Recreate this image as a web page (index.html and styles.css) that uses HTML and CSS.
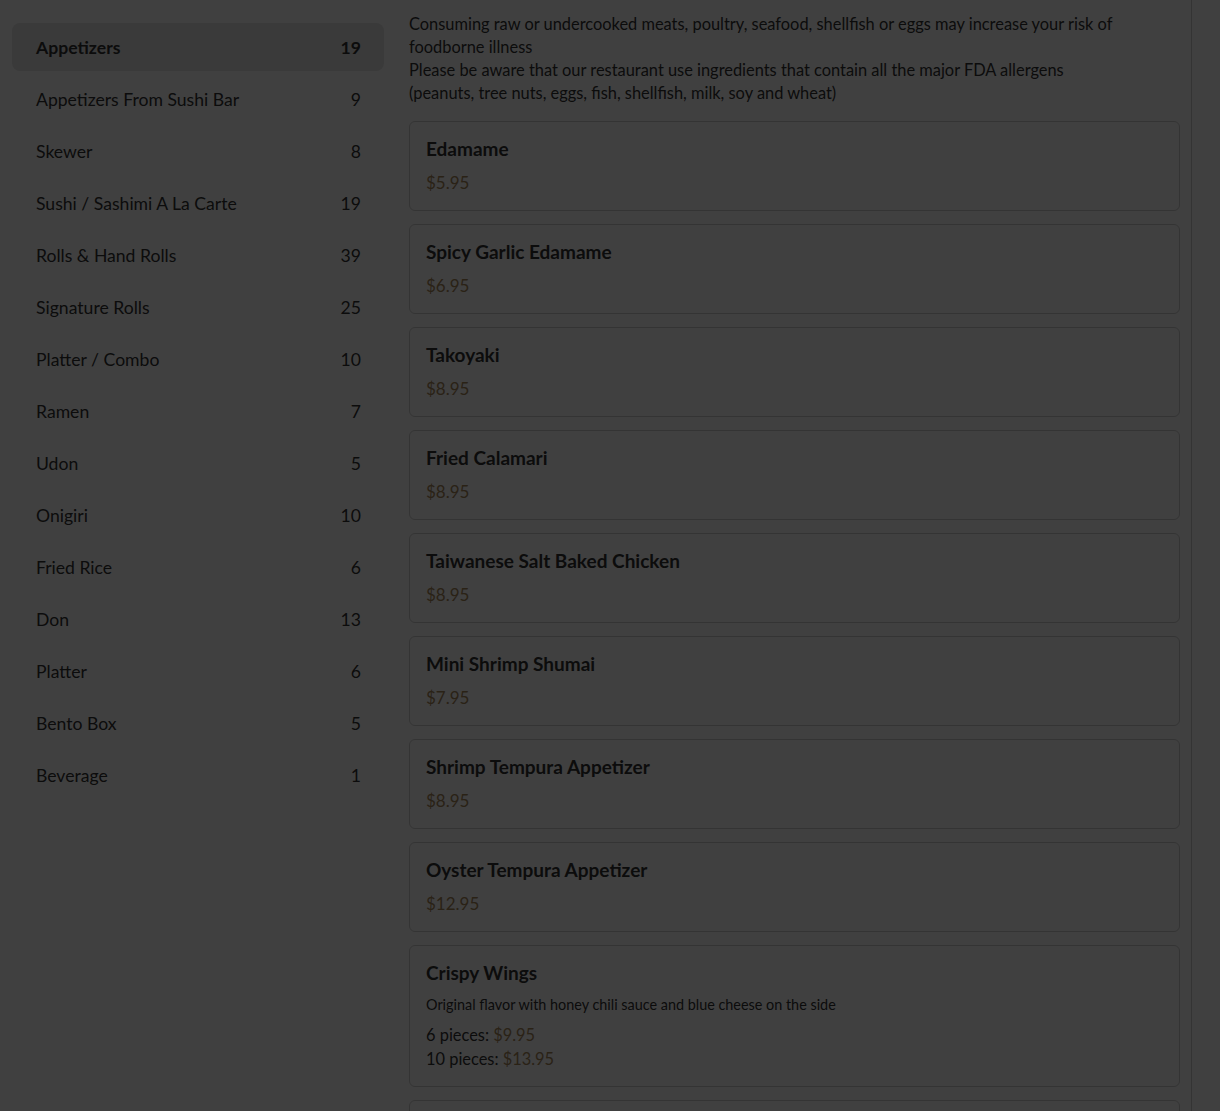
FILE: index.html
```html
<!DOCTYPE html>
<html lang="en">
<head>
    <meta charset="UTF-8">
    <meta name="viewport" content="width=device-width, initial-scale=1.0">
    <title>Menu</title>
    <link rel="stylesheet" href="styles.css">
</head>
<body>
    <div class="page">
        <aside class="sidebar">
            <h2 class="title">Menu</h2>
            <ul class="categories">
                <li class="active"><span>Appetizers</span><span>19</span></li>
                <li><span>Appetizers From Sushi Bar</span><span>9</span></li>
                <li><span>Skewer</span><span>8</span></li>
                <li><span>Sushi / Sashimi A La Carte</span><span>19</span></li>
                <li><span>Rolls &amp; Hand Rolls</span><span>39</span></li>
                <li><span>Signature Rolls</span><span>25</span></li>
                <li><span>Platter / Combo</span><span>10</span></li>
                <li><span>Ramen</span><span>7</span></li>
                <li><span>Udon</span><span>5</span></li>
                <li><span>Onigiri</span><span>10</span></li>
                <li><span>Fried Rice</span><span>6</span></li>
                <li><span>Don</span><span>13</span></li>
                <li><span>Platter</span><span>6</span></li>
                <li><span>Bento Box</span><span>5</span></li>
                <li><span>Beverage</span><span>1</span></li>
            </ul>
        </aside>
        <main class="content">
            <h2 class="title">Appetizers</h2>
            <p class="notes">Consuming raw or undercooked meats, poultry, seafood, shellfish or eggs may increase your risk of foodborne illness<br>Please be aware that our restaurant use ingredients that contain all the major FDA allergens<br>(peanuts, tree nuts, eggs, fish, shellfish, milk, soy and wheat)</p>

            <div class="item">
                <div class="name">Edamame</div>
                <div class="price">$5.95</div>
            </div>
            <div class="item">
                <div class="name">Spicy Garlic Edamame</div>
                <div class="price">$6.95</div>
            </div>
            <div class="item">
                <div class="name">Takoyaki</div>
                <div class="price">$8.95</div>
            </div>
            <div class="item">
                <div class="name">Fried Calamari</div>
                <div class="price">$8.95</div>
            </div>
            <div class="item">
                <div class="name">Taiwanese Salt Baked Chicken</div>
                <div class="price">$8.95</div>
            </div>
            <div class="item">
                <div class="name">Mini Shrimp Shumai</div>
                <div class="price">$7.95</div>
            </div>
            <div class="item">
                <div class="name">Shrimp Tempura Appetizer</div>
                <div class="price">$8.95</div>
            </div>
            <div class="item">
                <div class="name">Oyster Tempura Appetizer</div>
                <div class="price">$12.95</div>
            </div>
            <div class="item">
                <div class="name">Crispy Wings</div>
                <div class="desc">Original flavor with honey chili sauce and blue cheese on the side</div>
                <div class="options">
                    <div>6 pieces: <span class="amount">$9.95</span></div>
                    <div>10 pieces: <span class="amount">$13.95</span></div>
                </div>
            </div>
            <div class="item">
                <div class="name">Pork Gyoza</div>
                <div class="price">$6.95</div>
            </div>
        </main>
    </div>
    <div class="backdrop"></div>
</body>
</html>
```

FILE: styles.css
```css
body {
    margin: 0;
    font-family: Lato, "Noto Sans", sans-serif;
    color: #333;
    background: #fff;
    overflow: hidden;
}

.page {
    display: flex;
    gap: 25px;
    width: 1168px;
    padding: 0 11px 0 12px;
    margin-top: -45px;
    border-right: 1px solid #d0d0d0;
}

.title {
    font-size: 26px;
    font-weight: 700;
    line-height: 34px;
    margin: 0 0 34px;
}

.sidebar {
    width: 372px;
    flex: none;
}

.categories {
    list-style: none;
    margin: 0;
    padding: 0;
    display: flex;
    flex-direction: column;
    gap: 4px;
}

.categories li {
    display: flex;
    justify-content: space-between;
    align-items: center;
    height: 48px;
    padding: 0 23px 0 24px;
    font-size: 17.6px;
    border-radius: 8px;
}

.categories li.active {
    background: #e6e6e6;
    font-weight: 700;
}

.content {
    width: 771px;
    flex: none;
}

.content .title {
    margin-bottom: 23px;
}

.notes {
    font-size: 16.4px;
    line-height: 23px;
    margin: 0 0 17px;
}

.item {
    border: 1px solid #cfcfcf;
    border-radius: 6px;
    padding: 14px 16px 15px;
    margin-bottom: 13px;
}

.name {
    font-size: 19px;
    font-weight: 700;
    line-height: 25px;
}

.price {
    margin-top: 10px;
    font-size: 17px;
    line-height: 24px;
    color: #a8875a;
}

.desc {
    margin-top: 10px;
    font-size: 14.4px;
    line-height: 20px;
}

.options {
    margin-top: 8px;
    font-size: 16.4px;
    line-height: 24px;
}

.amount {
    color: #a8875a;
}

.backdrop {
    position: fixed;
    inset: 0;
    background: rgba(0, 0, 0, 0.75);
}
```
